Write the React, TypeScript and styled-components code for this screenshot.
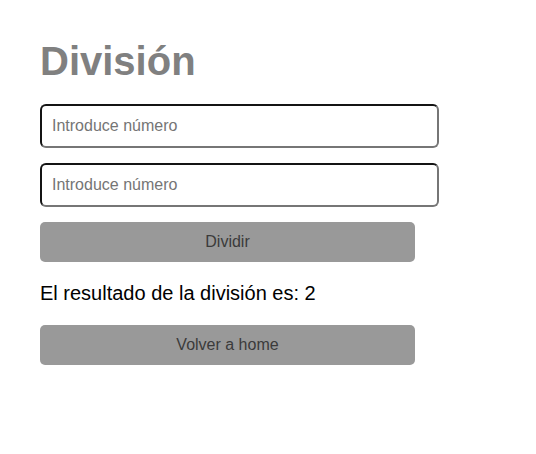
import React from "react";
import styled, { createGlobalStyle } from "styled-components";

const GlobalStyle = createGlobalStyle`
  html, body { margin: 0; padding: 0; background: #ffffff; }
  body { font-family: "Liberation Sans", Arial, sans-serif; }
`;

const Page = styled.main`
  display: flex;
  flex-direction: column;
  align-items: flex-start;
  padding: 38px 0 0 40px;
`;

const Title = styled.h1`
  margin: 0 0 20px 0;
  font-size: 40px;
  line-height: 46px;
  font-weight: 700;
  color: #808080;
`;

const Form = styled.form`
  display: flex;
  flex-direction: column;
  gap: 15px;
`;

const NumberInput = styled.input`
  box-sizing: border-box;
  width: 399px;
  height: 44px;
  padding: 0 10px;
  border: 2px solid;
  border-color: #141414 #767676 #767676 #141414;
  border-radius: 6px;
  font-family: "Liberation Sans", Arial, sans-serif;
  font-size: 16px;
  color: #000;
  background: #fff;
  outline: none;
  &::placeholder { color: #757575; }
`;

const ActionButton = styled.button`
  box-sizing: border-box;
  width: 375px;
  height: 40px;
  border: none;
  border-radius: 5px;
  background: #999999;
  color: #3b3b3b;
  font-family: "Liberation Sans", Arial, sans-serif;
  font-size: 16px;
  cursor: pointer;
`;

const Result = styled.p`
  margin: 20px 0;
  font-size: 20px;
  line-height: 23px;
  color: #000;
`;

export default function App() {
  return (
    <>
      <GlobalStyle />
      <Page>
        <Title>División</Title>
        <Form onSubmit={(e) => e.preventDefault()}>
          <NumberInput type="text" placeholder="Introduce número" />
          <NumberInput type="text" placeholder="Introduce número" />
          <ActionButton type="submit">Dividir</ActionButton>
        </Form>
        <Result>El resultado de la división es: 2</Result>
        <ActionButton type="button">Volver a home</ActionButton>
      </Page>
    </>
  );
}
